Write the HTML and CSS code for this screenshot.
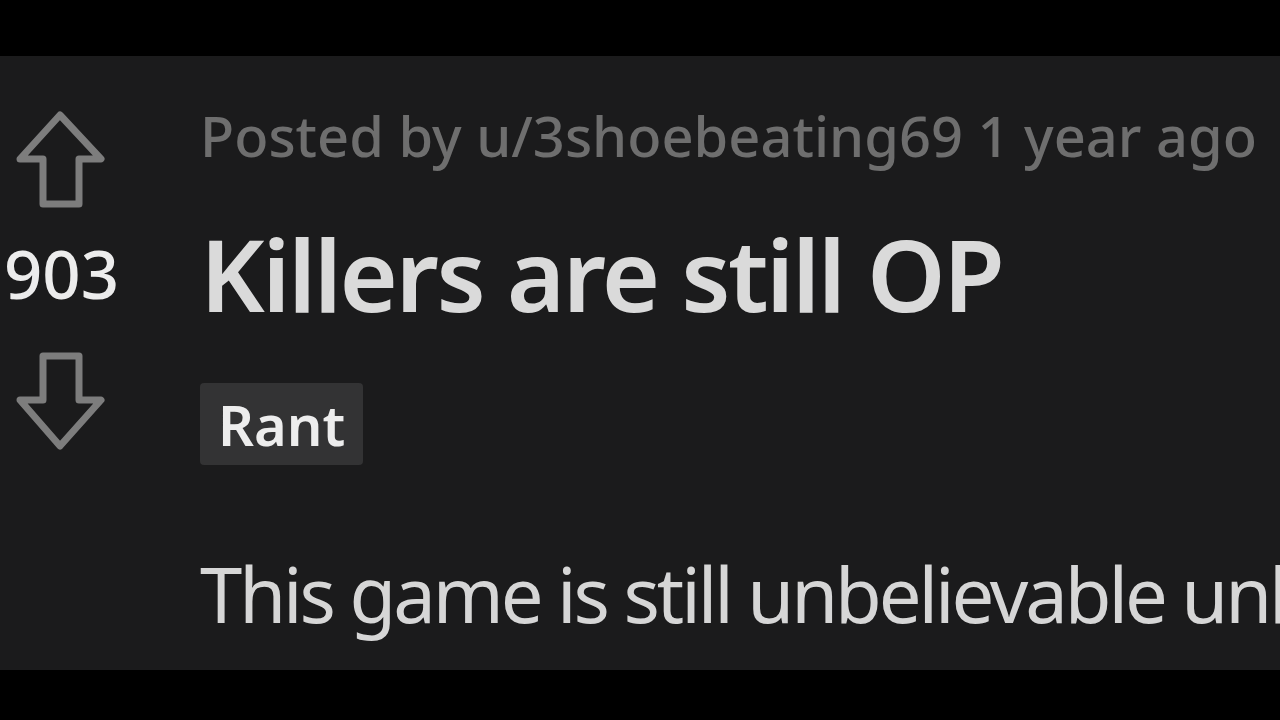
FILE: index.html
```html
<!DOCTYPE html>
<html lang="en">
<head>
	<meta charset="UTF-8">
	<meta name="viewport" content="width=device-width, initial-scale=1">
	<title>Killers are still OP</title>
	<link rel="stylesheet" href="styles.css">
</head>
<body>
	<div class="bar"></div>

	<div class="post">
		<div class="votes">
			<svg class="arrow up" viewBox="0 0 90 100" width="90" height="100">
				<path d="M45 5 L86 49 L64 49 L64 94 L28 94 L28 49 L5 49 Z" />
			</svg>
			<div class="score">903</div>
			<svg class="arrow down" viewBox="0 0 90 100" width="90" height="100">
				<path d="M45 98 L86 52 L64 52 L64 8 L28 8 L28 52 L5 52 Z" />
			</svg>
		</div>

		<div class="content">
			<div class="meta">Posted by u/3shoebeating69 1 year ago</div>
			<h1 class="title">Killers are still OP</h1>
			<span class="flair">Rant</span>
			<p class="body">This game is still unbelievable unbalanced</p>
		</div>
	</div>

	<div class="bar bottom"></div>
</body>
</html>
```

FILE: styles.css
```css
* {
	margin: 0;
	padding: 0;
}

html, body {
	height: 100%;
}

body {
	display: flex;
	flex-direction: column;
	background: #000;
	font-family: "Noto Sans", "Open Sans", sans-serif;
	overflow: hidden;
}

.bar {
	height: 56px;
	background: #000;
	flex: none;
}

.bar.bottom {
	height: 50px;
}

.post {
	flex: 1;
	display: flex;
	background: #1b1b1c;
	overflow: hidden;
}

/* vote column */
.votes {
	width: 200px;
	flex: none;
	display: flex;
	flex-direction: column;
	align-items: flex-start;
	padding-top: 54px;
}

.arrow {
	margin-left: 15px;
	overflow: visible;
	fill: none;
	stroke: #7d7d7d;
	stroke-width: 7;
	stroke-linejoin: round;
}

.score {
	font-size: 67px;
	font-weight: 500;
	color: #ececec;
	line-height: 67px;
	height: 67px;
	margin: 30px 0 41px 4px;
}

/* post content */
.content {
	flex: 1;
	min-width: 0;
	display: flex;
	flex-direction: column;
	align-items: flex-start;
	padding-top: 39px;
	white-space: nowrap;
	overflow: hidden;
}

.meta {
	font-size: 56px;
	font-weight: 500;
	color: #6e6e6e;
	line-height: 80px;
}

.title {
	margin-top: 38px;
	font-size: 100px;
	font-weight: 600;
	color: #dadada;
	line-height: 120px;
	letter-spacing: -2.5px;
}

.flair {
	margin-top: 50px;
	padding: 0 18px;
	font-size: 56px;
	font-weight: 600;
	line-height: 82px;
	color: #ededed;
	background: #333334;
	border-radius: 4px;
}

.body {
	margin-top: 83px;
	font-size: 76px;
	color: #d6d6d6;
	line-height: 1.2;
	letter-spacing: -3.1px;
}
```
